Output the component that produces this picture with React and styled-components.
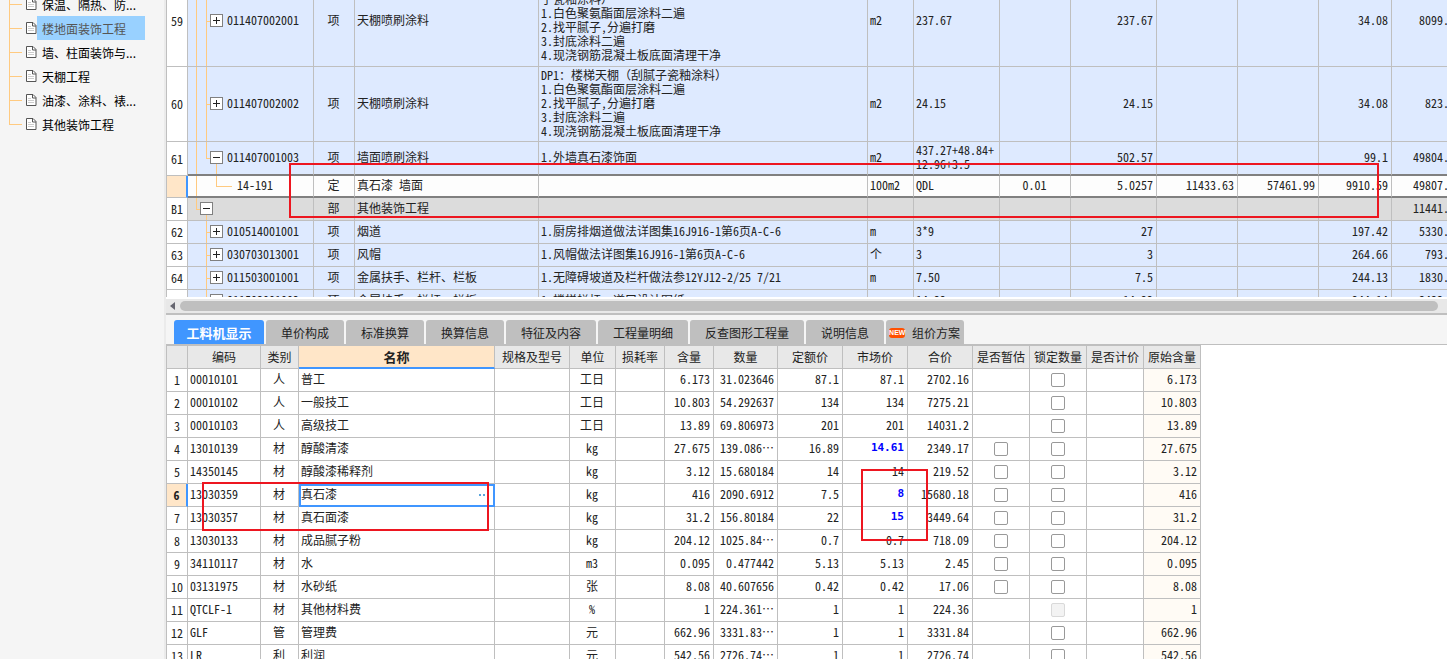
import React from "react"
import styled, { createGlobalStyle, css } from "styled-components"

const colors = {
  text: "#222",
  line: "#bfbfbf",
  panel: "#f5f5f5",
  head: "#e8e8e8",
  blue: "#4096ff",
  peach: "#ffe6c8",
  tree: "#ffca80",
  row: "#deeaff",
  section: "#dcdcdc",
  mark: "#ed1620",
}

const gridFont = `"Noto Sans Mono CJK SC", "Noto Sans CJK SC", monospace`
const uiFont = `"Noto Sans CJK SC", "Noto Sans", sans-serif`

const GlobalStyle = createGlobalStyle`
  * {
    box-sizing: border-box;
  }

  body {
    margin: 0;
    overflow: hidden;
    color: ${colors.text};
    font: 12px/14px ${uiFont};
  }

  button {
    border: 0;
    padding: 0;
    color: inherit;
    font: inherit;
    cursor: pointer;
  }
`

const Screen = styled.div`
  position: relative;
  display: flex;
  height: 100vh;
  overflow: hidden;
  background: #fff;
`

/* sidebar */

const Sidebar = styled.nav`
  flex: 0 0 166px;
  overflow: hidden;
  background: ${colors.panel};
  border-right: 2px solid #ebebeb;
`

const TreeList = styled.ul`
  list-style: none;
  margin: -8px 0 0;
  padding: 0 0 0 9px;
`

const TreeItem = styled.li`
  display: flex;
  align-items: center;
  height: 24px;
  background:
    linear-gradient(${colors.tree}, ${colors.tree}) no-repeat 0 12px / 13px 1px,
    linear-gradient(${colors.tree}, ${colors.tree}) no-repeat 0 0 / 1px
      ${props => (props.$last ? "12px" : "100%")};
  padding-left: 17px;
`

const TreeLink = styled.a`
  padding: 3px 19px 1px 5px;
  line-height: 20px;
  color: #000;
  text-decoration: none;
  white-space: nowrap;

  ${props =>
    props.$active &&
    css`
      background: #99d1ff;
      color: #555;
    `}
`

const PageIcon = () => (
  <svg width="11" height="24" viewBox="0 0 11 24" fill="none">
    <path d="M.5 6.5h6.5l3 3v8H.5z" fill="#fff" stroke="#555" />
    <path d="M6.5 6.5v3.5H10" stroke="#555" />
    <path d="M2 10.5h3M2 12.5h6M2 14.5h6" stroke="#ccc" />
  </svg>
)

/* workspace */

const Workspace = styled.main`
  flex: 1;
  min-width: 0;
  display: flex;
  flex-direction: column;
`

const UpperPane = styled.section`
  flex: 0 0 299px;
  overflow: hidden;
  border-bottom: 2px solid #fff;
`

const LowerPane = styled.section`
  flex: 1;
  min-height: 0;
  overflow: hidden;
`

const Grid = styled.table`
  table-layout: fixed;
  width: ${props => props.$width};
  margin-top: ${props => props.$scrolled || "0"};
  border-collapse: separate;
  border-spacing: 0;
  border-left: 1px solid ${colors.line};
  border-top: 1px solid ${colors.line};
  font: 12px/14px ${gridFont};
`

const Cell = styled.td`
  height: ${props => props.$height || "22px"};
  padding: 0 3px 2px 2px;
  border-right: 1px solid ${colors.line};
  border-bottom: 1px solid ${colors.line};
  text-align: ${props => props.$align || "left"};
  white-space: ${props => (props.$wrap ? "pre-line" : "nowrap")};
  overflow: hidden;
`

const IndexCell = styled(Cell).attrs({ as: "th", scope: "row" })`
  padding: 0;
  text-align: center;
  font-weight: ${props => (props.$bold ? 700 : 400)};
  background: ${props => (props.$current ? colors.peach : "#fff")};
  ${props => props.$current && `border-right: 2px solid ${colors.blue};`}
`

const BillRow = styled.tr`
  background: ${props => props.$tone || colors.row};

  ${Cell}:not(:first-child) {
    ${props => props.$heavy && "border-bottom: 2px solid #808080;"}
  }
`

const guide = (x, from, to) =>
  `linear-gradient(${colors.tree}, ${colors.tree}) no-repeat ${x} ${from} / 1px ${to}`
const branch = (x, length) =>
  `linear-gradient(${colors.tree}, ${colors.tree}) no-repeat ${x} 50% / ${length} 1px`

const guides = {
  item: [guide("8px", "0", "100%"), guide("18px", "0", "100%"), branch("18px", "4px")],
  open: [
    guide("8px", "0", "100%"),
    guide("18px", "0", "50%"),
    branch("18px", "4px"),
    guide("28px", "100%", "50%"),
  ],
  leaf: [guide("8px", "0", "100%"), guide("28px", "0", "50%"), branch("28px", "16px")],
  section: [guide("8px", "0", "50%"), branch("8px", "4px"), guide("18px", "100%", "50%")],
  child: [guide("18px", "0", "100%"), branch("18px", "4px")],
}

const CodeCell = styled(Cell)`
  padding-left: ${props => props.$indent};
  background: ${props => guides[props.$kind].join(", ")};
`

const CodeLine = styled.span`
  display: flex;
  align-items: center;
  gap: 4px;
`

const Toggle = styled.button`
  display: flex;
  flex: none;
  width: 13px;
  height: 13px;
  border: 1px solid #808080;
  background: #fff;
`

const Expander = ({ open }) => (
  <Toggle type="button" aria-label={open ? "折叠" : "展开"} aria-expanded={open}>
    <svg width="11" height="11" viewBox="0 0 11 11" stroke="#222">
      <path d={open ? "M2 5.5h7" : "M2 5.5h7M5.5 2v7"} />
    </svg>
  </Toggle>
)

/* scrollbar */

const ScrollTrack = styled.div`
  display: flex;
  flex: 0 0 16px;
  align-items: center;
  padding-right: 9px;
  background: ${colors.head};
  border-bottom: 2px solid ${colors.line};
`

const ScrollArrow = styled.button`
  display: flex;
  flex: 0 0 14px;
  justify-content: center;
  background: none;
`

const ScrollThumb = styled.div`
  flex: 1;
  height: 10px;
  border-radius: 5px;
  background: ${colors.line};
`

/* tabs */

const TabBar = styled.div`
  display: flex;
  flex: none;
  gap: 2px;
  padding: 5px 8px 0;
  background: ${colors.panel};
  border-bottom: 1px solid ${colors.line};
`

const Tab = styled.button`
  display: flex;
  align-items: center;
  justify-content: center;
  height: 24px;
  padding: ${props => (props.$badge ? "2px 4px 0 3px" : "2px 15px 0")};
  gap: 7px;
  border-radius: 3px 3px 0 0;
  background: ${colors.line};
  white-space: nowrap;

  ${props =>
    props.$active &&
    css`
      min-width: 90px;
      padding: 2px 12px 0;
      background: ${colors.blue};
      color: #fff;
      font-size: 13px;
      font-weight: 700;
    `}
`

const NewBadge = styled.span`
  width: 16px;
  border-radius: 3px;
  background: #ff5000;
  color: #fff;
  font: 700 7px/10px "Liberation Sans", sans-serif;
  text-align: center;
`

/* resources */

const HeadCell = styled(Cell).attrs({ as: "th", scope: "col" })`
  height: 23px;
  padding: 0;
  text-align: center;
  font-weight: 400;
  background: ${colors.head};

  ${props =>
    props.$current &&
    css`
      background: ${colors.peach};
      border-bottom: 2px solid ${colors.blue};
      font-size: 13px;
      font-weight: 700;
    `}
`

const PriceCell = styled(Cell)`
  ${props =>
    props.$changed &&
    css`
      color: #0000ff;
      font: 700 11px/14px "DejaVu Sans Mono", monospace;
    `}
`

const BaseCell = styled(Cell)`
  background: #fffbf5;
`

const NameCell = styled(Cell)`
  ${props =>
    props.$current &&
    css`
      outline: 2px solid ${colors.blue};
      outline-offset: -2px;
    `}
`

const NameLine = styled.span`
  display: flex;
  align-items: center;
  justify-content: space-between;
`

const MoreButton = styled.button`
  display: flex;
  margin-right: 1px;
  background: none;
`

const Check = styled.input.attrs({ type: "checkbox" })`
  display: block;
  appearance: none;
  width: 14px;
  height: 14px;
  margin: 1px auto 0;
  border: 1px solid #999;
  border-radius: 2px;
  background: #fff;

  &:checked {
    background: ${colors.blue};
  }

  &:disabled {
    border-color: #d9d9d9;
    background: #f3f3f3;
  }
`

const ResourceRow = styled.tr`
  height: 23px;
`

/* red review frames drawn over the grids */
const Mark = styled.div`
  position: absolute;
  border: 2px solid ${colors.mark};
  pointer-events: none;
`

const WallMark = styled(Mark)`
  left: 289px;
  top: 163px;
  width: 1090px;
  height: 55px;
`

const NameMark = styled(Mark)`
  left: 202px;
  top: 482px;
  width: 287px;
  height: 49px;
`

const PriceMark = styled(Mark)`
  left: 861px;
  top: 469px;
  width: 67px;
  height: 72px;
`

const chapters = [
  "保温、隔热、防...",
  "楼地面装饰工程",
  "墙、柱面装饰与...",
  "天棚工程",
  "油漆、涂料、裱...",
  "其他装饰工程",
]

const paintSteps =
  "1.白色聚氨酯面层涂料二遍\n2.找平腻子,分遍打磨\n3.封底涂料二遍\n4.现浇钢筋混凝土板底面清理干净"

const billColumns = [21, 126, 41, 184, 329, 46, 86, 71, 86, 81, 81, 73, 61]

const bill = [
  { no: "59", kind: "item", code: "011407002001", type: "项", name: "天棚喷刷涂料", desc: `\n子瓷釉涂料）\n${paintSteps}`, unit: "m2", formula: "237.67", qty: "237.67", rate: "34.08", sum: "8099.", height: "91px" },
  { no: "60", kind: "item", code: "011407002002", type: "项", name: "天棚喷刷涂料", desc: `DP1：楼梯天棚（刮腻子瓷釉涂料）\n${paintSteps}`, unit: "m2", formula: "24.15", qty: "24.15", rate: "34.08", sum: "823.", height: "75px" },
  { no: "61", kind: "open", code: "011407001003", type: "项", name: "墙面喷刷涂料", desc: "1.外墙真石漆饰面", unit: "m2", formula: "437.27+48.84+\n12.96+3.5", qty: "502.57", rate: "99.1", sum: "49804.", height: "34px", heavy: true },
  { no: "", kind: "leaf", code: "14-191", type: "定", name: "真石漆 墙面", desc: "", unit: "100m2", formula: "QDL", factor: "0.01", qty: "5.0257", price: "11433.63", total: "57461.99", rate: "9910.59", sum: "49807.", height: "22px", tone: "#fdfdfd", heavy: true },
  { no: "B1", kind: "section", code: "", type: "部", name: "其他装饰工程", sum: "11441.", tone: colors.section, height: "23px" },
  { no: "62", kind: "child", code: "010514001001", type: "项", name: "烟道", desc: "1.厨房排烟道做法详图集16J916-1第6页A-C-6", unit: "m", formula: "3*9", qty: "27", rate: "197.42", sum: "5330.", height: "23px" },
  { no: "63", kind: "child", code: "030703013001", type: "项", name: "风帽", desc: "1.风帽做法详图集16J916-1第6页A-C-6", unit: "个", formula: "3", qty: "3", rate: "264.66", sum: "793.", height: "23px" },
  { no: "64", kind: "child", code: "011503001001", type: "项", name: "金属扶手、栏杆、栏板", desc: "1.无障碍坡道及栏杆做法参12YJ12-2/25 7/21", unit: "m", formula: "7.50", qty: "7.5", rate: "244.13", sum: "1830.", height: "23px" },
  { no: "65", kind: "child", code: "011503001002", type: "项", name: "金属扶手、栏杆、栏板", desc: "1.楼梯栏杆、道口设计图纸", unit: "m", formula: "14.22", qty: "14.22", rate: "244.14", sum: "3433.", height: "23px" },
]

const indents = { item: "22px", child: "22px", open: "22px", section: "12px", leaf: "49px" }

const tabs = [
  "工料机显示",
  "单价构成",
  "标准换算",
  "换算信息",
  "特征及内容",
  "工程量明细",
  "反查图形工程量",
  "说明信息",
  "组价方案",
]

const resourceColumns = [
  ["", 21],
  ["编码", 73],
  ["类别", 38],
  ["名称", 196],
  ["规格及型号", 75],
  ["单位", 46],
  ["损耗率", 49],
  ["含量", 49],
  ["数量", 64],
  ["定额价", 65],
  ["市场价", 65],
  ["合价", 65],
  ["是否暂估", 57],
  ["锁定数量", 57],
  ["是否计价", 57],
  ["原始含量", 57],
]

// code, type, name, unit, content, quantity, quota price, market price, total, provisional
const resources = [
  ["00010101", "人", "普工", "工日", "6.173", "31.023646", "87.1", "87.1", "2702.16", false],
  ["00010102", "人", "一般技工", "工日", "10.803", "54.292637", "134", "134", "7275.21", false],
  ["00010103", "人", "高级技工", "工日", "13.89", "69.806973", "201", "201", "14031.2", false],
  ["13010139", "材", "醇酸清漆", "kg", "27.675", "139.086⋯", "16.89", "14.61", "2349.17", true],
  ["14350145", "材", "醇酸漆稀释剂", "kg", "3.12", "15.680184", "14", "14", "219.52", true],
  ["13030359", "材", "真石漆", "kg", "416", "2090.6912", "7.5", "8", "15680.18", true],
  ["13030357", "材", "真石面漆", "kg", "31.2", "156.80184", "22", "15", "3449.64", true],
  ["13030133", "材", "成品腻子粉", "kg", "204.12", "1025.84⋯", "0.7", "0.7", "718.09", true],
  ["34110117", "材", "水", "m3", "0.095", "0.477442", "5.13", "5.13", "2.45", true],
  ["03131975", "材", "水砂纸", "张", "8.08", "40.607656", "0.42", "0.42", "17.06", true],
  ["QTCLF-1", "材", "其他材料费", "%", "1", "224.361⋯", "1", "1", "224.36", false],
  ["GLF", "管", "管理费", "元", "662.96", "3331.83⋯", "1", "1", "3331.84", false],
  ["LR", "利", "利润", "元", "542.56", "2726.74⋯", "1", "1", "2726.74", false],
]

const currentResource = 5

const Chapters = () => (
  <Sidebar>
    <TreeList>
      {chapters.map((title, i) => (
        <TreeItem key={title} $last={i === chapters.length - 1}>
          <PageIcon />
          <TreeLink href="#" $active={i === 1}>
            {title}
          </TreeLink>
        </TreeItem>
      ))}
    </TreeList>
  </Sidebar>
)

const BillGrid = () => (
  <Grid $width="1287px" $scrolled="-25px">
    <colgroup>
      {billColumns.map((width, i) => (
        <col key={i} width={width} />
      ))}
    </colgroup>
    <tbody>
      {bill.map(row => (
        <BillRow key={row.no} $tone={row.tone} $heavy={row.heavy}>
          <IndexCell $current={row.kind === "leaf"}>{row.no}</IndexCell>
          <CodeCell $kind={row.kind} $indent={indents[row.kind]} $height={row.height}>
            <CodeLine>
              {row.kind !== "leaf" && (
                <Expander open={row.kind === "open" || row.kind === "section"} />
              )}
              {row.code}
            </CodeLine>
          </CodeCell>
          <Cell $align="center">{row.type}</Cell>
          <Cell>{row.name}</Cell>
          <Cell $wrap>{row.desc}</Cell>
          <Cell>{row.unit}</Cell>
          <Cell $wrap>{row.formula}</Cell>
          <Cell $align="center">{row.factor}</Cell>
          <Cell $align="right">{row.qty}</Cell>
          <Cell $align="right">{row.price}</Cell>
          <Cell $align="right">{row.total}</Cell>
          <Cell $align="right">{row.rate}</Cell>
          <Cell $align="right">{row.sum}</Cell>
        </BillRow>
      ))}
    </tbody>
  </Grid>
)

const ResourceGrid = () => (
  <Grid $width="1035px">
    <colgroup>
      {resourceColumns.map(([title, width]) => (
        <col key={title} width={width} />
      ))}
    </colgroup>
    <thead>
      <tr>
        {resourceColumns.map(([title]) => (
          <HeadCell key={title} $current={title === "名称"}>
            {title}
          </HeadCell>
        ))}
      </tr>
    </thead>
    <tbody>
      {resources.map(([code, type, name, unit, content, qty, quota, market, total, provisional], i) => (
        <ResourceRow key={code}>
          <IndexCell $current={i === currentResource} $bold={i === currentResource}>
            {i + 1}
          </IndexCell>
          <Cell>{code}</Cell>
          <Cell $align="center">{type}</Cell>
          <NameCell $current={i === currentResource}>
            <NameLine>
              {name}
              {i === currentResource && (
                <MoreButton type="button" aria-label="选择材料">
                  <svg width="12" height="3" viewBox="0 0 12 3" fill="#5aa5dc">
                    <path d="M1 1h2v2H1zM5 1h2v2H5zM9 1h2v2H9z" />
                  </svg>
                </MoreButton>
              )}
            </NameLine>
          </NameCell>
          <Cell />
          <Cell $align="center">{unit}</Cell>
          <Cell />
          <Cell $align="right">{content}</Cell>
          <Cell $align="right">{qty}</Cell>
          <Cell $align="right">{quota}</Cell>
          <PriceCell $align="right" $changed={quota !== market}>
            {market}
          </PriceCell>
          <Cell $align="right">{total}</Cell>
          <Cell>{provisional && <Check aria-label={`${name} 是否暂估`} />}</Cell>
          <Cell>
            <Check aria-label={`${name} 锁定数量`} disabled={unit === "%"} />
          </Cell>
          <Cell />
          <BaseCell $align="right">{content}</BaseCell>
        </ResourceRow>
      ))}
    </tbody>
  </Grid>
)

const App = () => {
  return (
    <>
      <GlobalStyle />
      <Screen>
        <Chapters />
        <Workspace>
          <UpperPane>
            <BillGrid />
          </UpperPane>
          <ScrollTrack>
            <ScrollArrow type="button" aria-label="向左滚动">
              <svg width="6" height="8" viewBox="0 0 6 8" fill="#666670">
                <path d="M5 0v8L0 4z" />
              </svg>
            </ScrollArrow>
            <ScrollThumb />
          </ScrollTrack>
          <TabBar role="tablist">
            {tabs.map((title, i) => (
              <Tab
                key={title}
                type="button"
                role="tab"
                aria-selected={i === 0}
                $active={i === 0}
                $badge={title === "组价方案"}
              >
                {title === "组价方案" && <NewBadge>NEW</NewBadge>}
                {title}
              </Tab>
            ))}
          </TabBar>
          <LowerPane>
            <ResourceGrid />
          </LowerPane>
        </Workspace>
        <WallMark />
        <NameMark />
        <PriceMark />
      </Screen>
    </>
  )
}

export default App
